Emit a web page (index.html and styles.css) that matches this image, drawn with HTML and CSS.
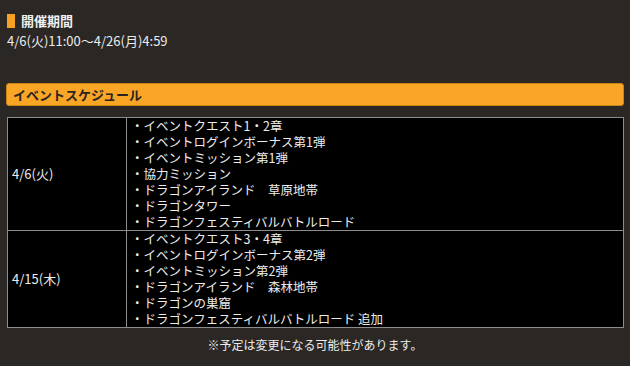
FILE: index.html
```html
<!DOCTYPE html>
<html lang="ja">
<head>
    <meta charset="UTF-8">
    <meta name="viewport" content="width=device-width, initial-scale=1.0">
    <title>イベントスケジュール</title>
    <link rel="stylesheet" href="styles.css">
</head>
<body>
    <div class="event">
        <h2 class="period-title">開催期間</h2>
        <p class="period">4/6(火)11:00～4/26(月)4:59</p>

        <h2 class="bar-title">イベントスケジュール</h2>
        <table class="schedule">
            <tr>
                <td class="date">4/6(火)</td>
                <td class="items">
                    ・イベントクエスト1・2章<br>
                    ・イベントログインボーナス第1弾<br>
                    ・イベントミッション第1弾<br>
                    ・協力ミッション<br>
                    ・ドラゴンアイランド　草原地帯<br>
                    ・ドラゴンタワー<br>
                    ・ドラゴンフェスティバルバトルロード
                </td>
            </tr>
            <tr>
                <td class="date">4/15(木)</td>
                <td class="items">
                    ・イベントクエスト3・4章<br>
                    ・イベントログインボーナス第2弾<br>
                    ・イベントミッション第2弾<br>
                    ・ドラゴンアイランド　森林地帯<br>
                    ・ドラゴンの巣窟<br>
                    ・ドラゴンフェスティバルバトルロード 追加
                </td>
            </tr>
        </table>
        <p class="note">※予定は変更になる可能性があります。</p>
    </div>
</body>
</html>
```

FILE: styles.css
```css
body {
    margin: 0;
    background-color: #2a2725;
    color: #ececec;
    font-family: "Noto Sans CJK JP", "Noto Sans", sans-serif;
    font-size: 13px;
}
.event {
    padding: 13px 6px 0 6px;
}
.period-title {
    display: flex;
    align-items: center;
    gap: 6px;
    margin: 0 0 0 1px;
    font-size: 13px;
    line-height: 15px;
    font-weight: bold;
    color: #f0f0f0;
}
.period-title::before {
    content: "";
    width: 8px;
    height: 14px;
    background: #f7a124;
}
.period {
    margin: 4px 0 0 1px;
    line-height: 18px;
}
.bar-title {
    margin: 33px 0 0 0;
    padding: 0 6px;
    height: 21px;
    line-height: 21px;
    font-size: 13px;
    font-weight: bold;
    color: #2a2420;
    background: #f9a526;
    border: 1px solid #c98416;
    border-radius: 3px;
}
.schedule {
    width: calc(100% - 1px);
    margin: 11px 0 0 1px;
    border-collapse: collapse;
    background: #000;
}
.schedule td {
    border: 1px solid #8c8c8c;
    padding: 0 4px;
    line-height: 16px;
}
.date {
    width: 110px;
}
.items {
    padding-left: 3px;
    font-size: 12.5px;
}
.note {
    margin: 8px 0 0 0;
    text-align: center;
    font-size: 12px;
    line-height: 18px;
}
```
